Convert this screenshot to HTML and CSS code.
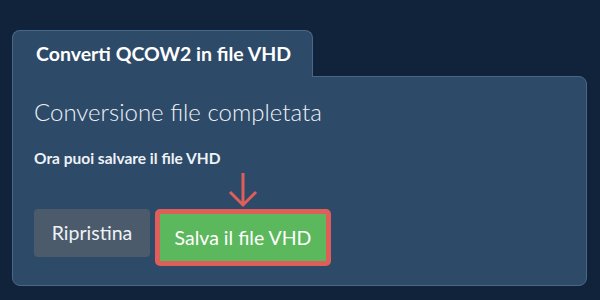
FILE: index.html
```html
<!DOCTYPE html>
<html lang="it">

<head>
  <meta charset="UTF-8" />
  <title>Converti QCOW2 in file VHD</title>
  <link rel="stylesheet" href="styles.css">
</head>

<body>
  <div class="page">
    <div class="tab">Converti QCOW2 in file VHD</div>
    <div class="panel">
      <h2>Conversione file completata</h2>
      <p class="note">Ora puoi salvare il file VHD</p>
      <div class="actions">
        <button class="btn btn-reset">Ripristina</button>
        <div class="highlight">
          <!-- freccia che indica il pulsante -->
          <svg class="arrow" width="32" height="36" viewBox="0 0 32 36">
            <path d="M16 1 V33 M3 20 L16 33 L29 20" fill="none" stroke="#de5f5a" stroke-width="3" />
          </svg>
          <button class="btn btn-save">Salva il file VHD</button>
        </div>
      </div>
    </div>
  </div>
</body>

</html>
```

FILE: styles.css
```css
body {
  margin: 0;
  background-color: #11233a;
  color: #eef2f6;
  font-family: Lato, "Open Sans", sans-serif;
}

.page {
  padding: 30px 13px 14px 12px;
}

.tab {
  display: inline-block;
  padding: 12px 23px 12px 23px;
  font-size: 19.5px;
  font-weight: 700;
  line-height: 22px;
  color: #ffffff;
  background-color: #2d4a69;
  border: 1px solid #4b6788;
  border-bottom: none;
  border-radius: 8px 8px 0 0;
  position: relative;
  z-index: 1;
  margin-bottom: -1px;
  width: 253px;
  white-space: nowrap;
}

.panel {
  background-color: #2d4a69;
  border: 1px solid #4b6788;
  border-radius: 0 8px 8px 8px;
  padding: 18px 21px 19px 21px;
}

.panel h2 {
  margin: 0;
  font-size: 24px;
  font-weight: 300;
  line-height: 34px;
}

.note {
  margin: 20px 0 0 0;
  font-size: 15.5px;
  font-weight: 700;
  line-height: 18px;
}

.actions {
  display: flex;
  align-items: flex-start;
  gap: 5px;
  margin-top: 42px;
}

.btn {
  font-family: Lato, "Open Sans", sans-serif;
  font-size: 19.5px;
  line-height: 22px;
  color: #eef2f6;
  border: none;
  border-radius: 4px;
  padding: 13px 0;
  cursor: pointer;
}

.btn-reset {
  width: 116px;
  height: 48px;
  background-color: #4b5b6b;
}

.highlight {
  position: relative;
  border: 5px solid #de5f5a;
  border-radius: 5px;
  display: flex;
}

.btn-save {
  width: 166px;
  height: 47px;
  background-color: #5cb85c;
  border-radius: 0;
  color: #ffffff;
}

.arrow {
  position: absolute;
  left: 67px;
  top: -42px;
}
```
